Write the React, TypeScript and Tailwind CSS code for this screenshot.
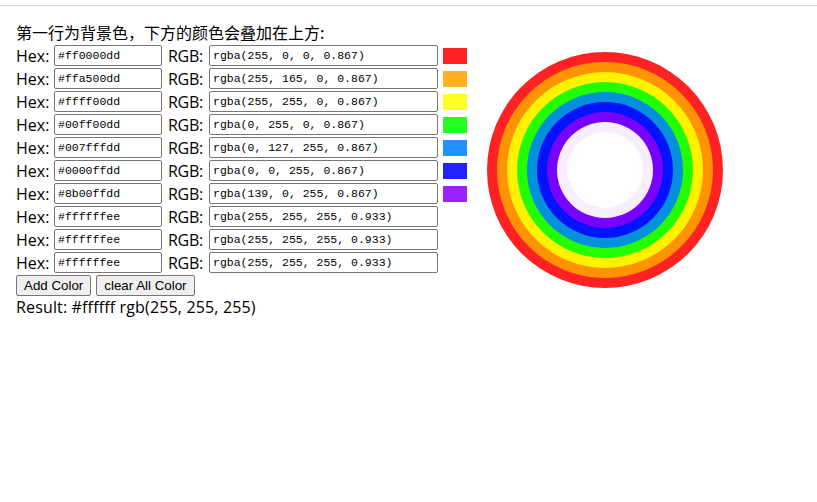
import React from 'react'

interface ColorItem {
  hex: string
  rgb: string
}

const colors: ColorItem[] = [
  { hex: '#ff0000dd', rgb: 'rgba(255, 0, 0, 0.867)' },
  { hex: '#ffa500dd', rgb: 'rgba(255, 165, 0, 0.867)' },
  { hex: '#ffff00dd', rgb: 'rgba(255, 255, 0, 0.867)' },
  { hex: '#00ff00dd', rgb: 'rgba(0, 255, 0, 0.867)' },
  { hex: '#007fffdd', rgb: 'rgba(0, 127, 255, 0.867)' },
  { hex: '#0000ffdd', rgb: 'rgba(0, 0, 255, 0.867)' },
  { hex: '#8b00ffdd', rgb: 'rgba(139, 0, 255, 0.867)' },
  { hex: '#ffffffee', rgb: 'rgba(255, 255, 255, 0.933)' },
  { hex: '#ffffffee', rgb: 'rgba(255, 255, 255, 0.933)' },
  { hex: '#ffffffee', rgb: 'rgba(255, 255, 255, 0.933)' },
]

// nested rings, outer one is the background colour
const Rings = ({ index }: { index: number }) => {
  if (index >= colors.length) return null
  const size = 236 - index * 20
  return (
    <div
      className="rounded-full flex items-center justify-center shrink-0"
      style={{ width: size, height: size, backgroundColor: colors[index].rgb }}
    >
      <Rings index={index + 1} />
    </div>
  )
}

const inputCls =
  "shrink-0 h-[21px] border border-[#767676] rounded-[2px] px-[3px] bg-white text-black text-[11.5px] leading-[19px] font-['Liberation_Mono',monospace] outline-none"

const btnCls =
  "h-[21px] px-[7px] border border-[#767676] rounded-[2px] bg-[#efefef] text-[13.33px] leading-[19px] font-['Liberation_Sans',sans-serif]"

export default function App() {
  return (
    <div className="min-h-[502px] bg-white font-['Open_Sans','Noto_Sans_CJK_SC',sans-serif] text-black">
      <div className="h-[5px]" />
      <div className="border-t border-[#d4d4d4] px-4 pt-[15px]">
        <div className="h-[23px] leading-[23px] text-[16px] font-['Noto_Sans_CJK_SC',sans-serif]">
          第一行为背景色，下方的颜色会叠加在上方:
        </div>
        <div className="flex items-start">
          <div className="flex flex-col shrink-0">
            {colors.map((c, i) => (
              <div key={i} className="flex items-center h-[23px] text-[16px] leading-[20px] whitespace-nowrap">
                <span className="w-[38px] shrink-0">Hex:</span>
                <input readOnly value={c.hex} className={`${inputCls} w-[108px]`} />
                <span className="ml-[6px] w-[41px] shrink-0 tracking-[-0.3px]">RGB:</span>
                <input readOnly value={c.rgb} className={`${inputCls} w-[229px]`} />
                <span className="ml-[5px] w-[24px] h-4 shrink-0" style={{ backgroundColor: c.rgb }} />
              </div>
            ))}
            <div className="flex gap-[5px] mt-[1px]">
              <button className={btnCls}>Add Color</button>
              <button className={btnCls}>clear All Color</button>
            </div>
            <div className="text-[16px] leading-[20px] mt-[1px] tracking-[0.15px]">
              Result: #ffffff rgb(255, 255, 255)
            </div>
          </div>
          <div className="ml-[20px] mt-[8px] shrink-0">
            <Rings index={0} />
          </div>
        </div>
      </div>
    </div>
  )
}
